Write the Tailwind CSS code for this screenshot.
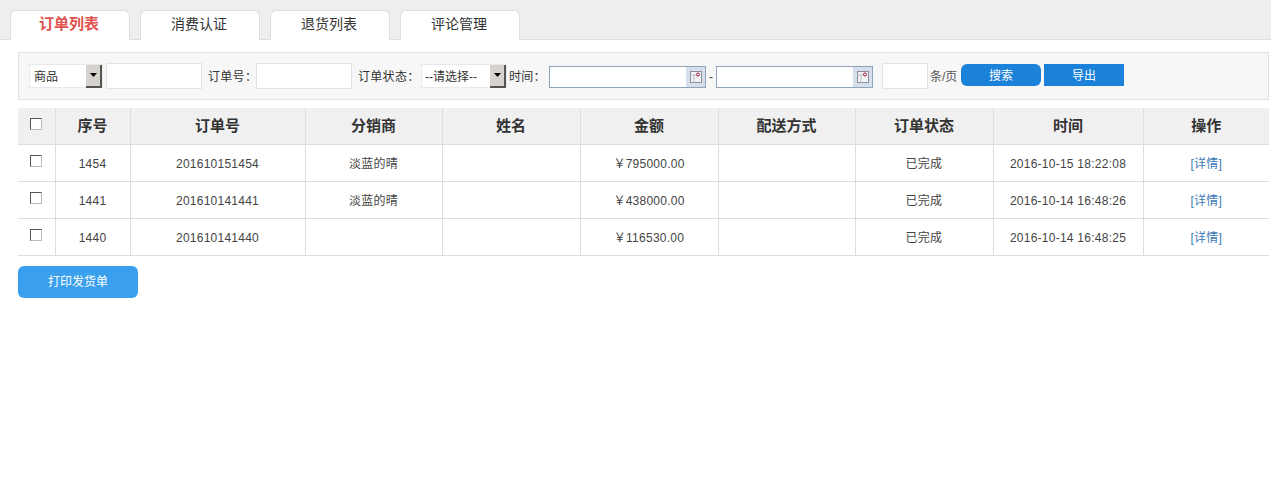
<!DOCTYPE html>
<html>
  <head>
    <meta charset="utf-8" />
    <script src="https://cdn.jsdelivr.net/npm/@tailwindcss/browser@4"></script>
  </head>
  <body class="bg-white h-[490px] overflow-hidden font-['Liberation_Sans','Noto_Sans_CJK_SC',sans-serif] text-[#333]">
    <!-- tabs -->
    <div class="h-10 bg-[#eeeeee] border-b border-[#dddddd] flex items-end gap-2.5 pl-2.5">
      <a class="w-[120px] h-[30px] -mb-px pb-0.5 pr-0.5 bg-white border border-b-0 border-[#dddddd] rounded-t-md flex items-center justify-center text-[15px] font-bold text-[#e0524d]">订单列表</a>
      <a class="w-[120px] h-[30px] -mb-px pb-1 pr-0.5 bg-white border border-b-0 border-[#dddddd] rounded-t-md flex items-center justify-center text-sm">消费认证</a>
      <a class="w-[120px] h-[30px] -mb-px pb-1 pr-0.5 bg-white border border-b-0 border-[#dddddd] rounded-t-md flex items-center justify-center text-sm">退货列表</a>
      <a class="w-[120px] h-[30px] -mb-px pb-1 pr-0.5 bg-white border border-b-0 border-[#dddddd] rounded-t-md flex items-center justify-center text-sm">评论管理</a>
    </div>

    <div class="px-[18px] pr-0.5 pt-3">
      <!-- filter bar -->
      <div class="h-12 bg-[#f7f7f7] border border-[#e2e2e2] flex items-center pl-2.5 text-xs">
        <div class="w-[74px] h-6 bg-white border border-[#e8e8e8] flex items-center justify-between pl-1">
          <span class="pt-0.5">商品</span>
          <span class="w-4 h-[23px] bg-[#d6d3ce] border-r-2 border-b-2 border-[#555] flex items-center justify-center">
            <svg width="7" height="4" viewBox="0 0 7 4"><path d="M0 0h7L3.500 4z" fill="#000" /></svg>
          </span>
        </div>
        <div class="w-24 h-[26px] ml-[3px] bg-white border border-[#e2e2e2]"></div>
        <span class="ml-[6px] pt-0.5 w-[48px] whitespace-nowrap tracking-[0.3px]">订单号：</span>
        <div class="w-24 h-[26px] bg-white border border-[#e2e2e2]"></div>
        <span class="ml-[6px] pt-0.5 w-[63px] whitespace-nowrap tracking-[0.3px]">订单状态：</span>
        <div class="w-[86px] h-6 bg-white border border-[#e8e8e8] flex items-center justify-between pl-[3px]">
          <span class="pt-0.5 whitespace-nowrap">--请选择--</span>
          <span class="w-4 h-[23px] bg-[#d6d3ce] border-r-2 border-b-2 border-[#555] flex items-center justify-center">
            <svg width="7" height="4" viewBox="0 0 7 4"><path d="M0 0h7L3.500 4z" fill="#000" /></svg>
          </span>
        </div>
        <span class="ml-[2px] pt-0.5 w-10 whitespace-nowrap tracking-[0.3px]">时间：</span>
        <div class="mt-0.5 w-[157px] h-[22px] bg-white border border-[#8fa3bd] flex justify-end">
          <span class="w-[19px] bg-[#d5dfeb] flex items-center justify-center">
            <svg width="12" height="12" viewBox="0 0 12 12"><rect x="0.500" y="0.500" width="11" height="11" fill="#f4f4f4" stroke="#8a8f9c" /><path d="M0 4h8M4 4v8" stroke="#b8bcc6" /><circle cx="8" cy="3.500" r="1.500" fill="#fff" stroke="#a0103c" /></svg>
          </span>
        </div>
        <span class="pt-0.5 w-[10px] text-center">-</span>
        <div class="mt-0.5 w-[157px] h-[22px] bg-white border border-[#8fa3bd] flex justify-end">
          <span class="w-[19px] bg-[#d5dfeb] flex items-center justify-center">
            <svg width="12" height="12" viewBox="0 0 12 12"><rect x="0.500" y="0.500" width="11" height="11" fill="#f4f4f4" stroke="#8a8f9c" /><path d="M0 4h8M4 4v8" stroke="#b8bcc6" /><circle cx="8" cy="3.500" r="1.500" fill="#fff" stroke="#a0103c" /></svg>
          </span>
        </div>
        <div class="ml-[9px] w-[46px] h-[26px] bg-white border border-[#e2e2e2]"></div>
        <span class="ml-[2px] pt-0.5 w-[31px] whitespace-nowrap text-[#555]">条/页</span>
        <a class="mb-0.5 pt-0.5 w-20 h-[22px] bg-[#1c81d8] rounded-md text-white flex items-center justify-center">搜索</a>
        <a class="mb-0.5 pt-0.5 ml-[3px] w-20 h-[22px] bg-[#1c81d8] text-white flex items-center justify-center">导出</a>
      </div>

      <!-- orders -->
      <table class="mt-2 w-[1251px] table-fixed border-collapse text-xs text-center">
        <colgroup>
          <col class="w-[37px]" />
          <col class="w-[75px]" />
          <col class="w-[175px]" />
          <col class="w-[137px]" />
          <col class="w-[138px]" />
          <col class="w-[138px]" />
          <col class="w-[137px]" />
          <col class="w-[138px]" />
          <col class="w-[150px]" />
          <col class="w-[126px]" />
        </colgroup>
        <thead>
          <tr class="h-[36px] bg-[#f0f0f0] border-b border-[#dddddd] text-[15px] font-bold">
            <th class="border-r border-[#dddddd] align-top pt-[10px]"><span class="block ml-[12px] w-[12px] h-3 border border-[#555] border-b-[#bbb] border-r-[#bbb] bg-white"></span></th>
            <th class="border-r border-[#dddddd]">序号</th>
            <th class="border-r border-[#dddddd]">订单号</th>
            <th class="border-r border-[#dddddd]">分销商</th>
            <th class="border-r border-[#dddddd]">姓名</th>
            <th class="border-r border-[#dddddd]">金额</th>
            <th class="border-r border-[#dddddd]">配送方式</th>
            <th class="border-r border-[#dddddd]">订单状态</th>
            <th class="border-r border-[#dddddd]">时间</th>
            <th>操作</th>
          </tr>
        </thead>
        <tbody class="tracking-[0.25px] text-[#444]">
          <tr class="h-[37px] border-b border-[#dddddd]">
            <td class="border-r border-[#dddddd] align-top pt-[10px]"><span class="block ml-[12px] w-[12px] h-3 border border-[#555] border-b-[#bbb] border-r-[#bbb] bg-white"></span></td>
            <td class="border-r border-[#dddddd] pt-0.5">1454</td>
            <td class="border-r border-[#dddddd] pt-0.5">201610151454</td>
            <td class="border-r border-[#dddddd] pt-0.5">淡蓝的晴</td>
            <td class="border-r border-[#dddddd]"></td>
            <td class="border-r border-[#dddddd] pt-0.5">￥795000.00</td>
            <td class="border-r border-[#dddddd]"></td>
            <td class="border-r border-[#dddddd] pt-0.5">已完成</td>
            <td class="border-r border-[#dddddd] pt-0.5">2016-10-15 18:22:08</td>
            <td class="pt-0.5 text-[#3b78b5]">[详情]</td>
          </tr>
          <tr class="h-[37px] border-b border-[#dddddd]">
            <td class="border-r border-[#dddddd] align-top pt-[10px]"><span class="block ml-[12px] w-[12px] h-3 border border-[#555] border-b-[#bbb] border-r-[#bbb] bg-white"></span></td>
            <td class="border-r border-[#dddddd] pt-0.5">1441</td>
            <td class="border-r border-[#dddddd] pt-0.5">201610141441</td>
            <td class="border-r border-[#dddddd] pt-0.5">淡蓝的晴</td>
            <td class="border-r border-[#dddddd]"></td>
            <td class="border-r border-[#dddddd] pt-0.5">￥438000.00</td>
            <td class="border-r border-[#dddddd]"></td>
            <td class="border-r border-[#dddddd] pt-0.5">已完成</td>
            <td class="border-r border-[#dddddd] pt-0.5">2016-10-14 16:48:26</td>
            <td class="pt-0.5 text-[#3b78b5]">[详情]</td>
          </tr>
          <tr class="h-[37px] border-b border-[#dddddd]">
            <td class="border-r border-[#dddddd] align-top pt-[10px]"><span class="block ml-[12px] w-[12px] h-3 border border-[#555] border-b-[#bbb] border-r-[#bbb] bg-white"></span></td>
            <td class="border-r border-[#dddddd] pt-0.5">1440</td>
            <td class="border-r border-[#dddddd] pt-0.5">201610141440</td>
            <td class="border-r border-[#dddddd]"></td>
            <td class="border-r border-[#dddddd]"></td>
            <td class="border-r border-[#dddddd] pt-0.5">￥116530.00</td>
            <td class="border-r border-[#dddddd]"></td>
            <td class="border-r border-[#dddddd] pt-0.5">已完成</td>
            <td class="border-r border-[#dddddd] pt-0.5">2016-10-14 16:48:25</td>
            <td class="pt-0.5 text-[#3b78b5]">[详情]</td>
          </tr>
        </tbody>
      </table>

      <a class="mt-2.5 w-[120px] h-8 bg-[#3a9fec] rounded-md text-white text-xs flex items-center justify-center">打印发货单</a>
    </div>
  </body>
</html>
